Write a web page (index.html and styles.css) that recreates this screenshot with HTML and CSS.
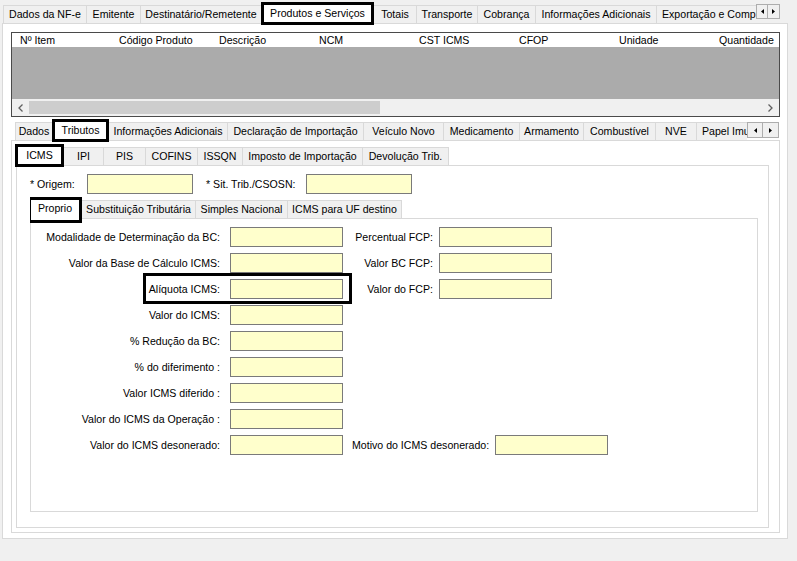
FILE: index.html
```html
<!DOCTYPE html>
<html lang="pt-BR">
<head>
<meta charset="utf-8">
<title>NF-e - Produtos e Serviços</title>
<link rel="stylesheet" href="styles.css">
</head>
<body>
<div class="strip top">
  <div class="tabs">
    <div class="tab">Dados da NF-e</div>
    <div class="tab">Emitente</div>
    <div class="tab">Destinatário/Remetente</div>
    <div class="tab sel hl">Produtos e Serviços</div>
    <div class="tab">Totais</div>
    <div class="tab">Transporte</div>
    <div class="tab">Cobrança</div>
    <div class="tab">Informações Adicionais</div>
    <div class="tab last">Exportação e Compra</div>
  </div>
  <div class="scroller small">
    <span class="sbtn"><svg width="3" height="5" viewBox="0 0 3 5"><polygon points="3,0 3,5 0,2.5" fill="#000"/></svg></span>
    <span class="sbtn"><svg width="3" height="5" viewBox="0 0 3 5"><polygon points="0,0 0,5 3,2.5" fill="#000"/></svg></span>
  </div>
</div>
<div class="panel outer">
  <div class="grid">
    <div class="ghead">
      <div class="gcol first">Nº Item</div>
      <div class="gcol">Código Produto</div>
      <div class="gcol">Descrição</div>
      <div class="gcol">NCM</div>
      <div class="gcol">CST ICMS</div>
      <div class="gcol">CFOP</div>
      <div class="gcol">Unidade</div>
      <div class="gcol">Quantidade</div>
    </div>
    <div class="gbody"></div>
    <div class="hscroll">
      <span class="harrow"><svg width="5" height="8" viewBox="0 0 5 8"><polyline points="4.5,0.5 1,4 4.5,7.5" fill="none" stroke="#606060" stroke-width="1.3"/></svg></span>
      <span class="track"><span class="thumb"></span></span>
      <span class="harrow"><svg width="5" height="8" viewBox="0 0 5 8"><polyline points="0.5,0.5 4,4 0.5,7.5" fill="none" stroke="#606060" stroke-width="1.3"/></svg></span>
    </div>
  </div>

  <div class="strip second">
    <div class="tabs">
      <div class="tab">Dados</div>
      <div class="tab sel hl">Tributos</div>
      <div class="tab">Informações Adicionais</div>
      <div class="tab">Declaração de Importação</div>
      <div class="tab">Veículo Novo</div>
      <div class="tab">Medicamento</div>
      <div class="tab">Armamento</div>
      <div class="tab">Combustível</div>
      <div class="tab">NVE</div>
      <div class="tab last">Papel Imune</div>
    </div>
    <div class="scroller big">
      <span class="sbtn"><svg width="3" height="5" viewBox="0 0 3 5"><polygon points="3,0 3,5 0,2.5" fill="#000"/></svg></span>
      <span class="sbtn"><svg width="3" height="5" viewBox="0 0 3 5"><polygon points="0,0 0,5 3,2.5" fill="#000"/></svg></span>
    </div>
  </div>
  <div class="panel trib">
    <div class="strip third">
      <div class="tabs">
        <div class="tab sel hl">ICMS</div>
        <div class="tab">IPI</div>
        <div class="tab">PIS</div>
        <div class="tab">COFINS</div>
        <div class="tab">ISSQN</div>
        <div class="tab">Imposto de Importação</div>
        <div class="tab">Devolução Trib.</div>
      </div>
    </div>
    <div class="panel icms">
      <div class="origem">
        <span class="olabel">* Origem:</span>
        <span class="inp short"></span>
        <span class="olabel2">* Sit. Trib./CSOSN:</span>
        <span class="inp short"></span>
      </div>
      <div class="strip fourth">
        <div class="tabs">
          <div class="tab sel hl">Proprio</div>
          <div class="tab">Substituição Tributária</div>
          <div class="tab">Simples Nacional</div>
          <div class="tab">ICMS para UF destino</div>
        </div>
      </div>
      <div class="panel proprio">
        <div class="frow">
          <span class="flabel">Modalidade de Determinação da BC:</span><span class="inp"></span>
          <span class="flabel2">Percentual FCP:</span><span class="inp"></span>
        </div>
        <div class="frow">
          <span class="flabel">Valor da Base de Cálculo ICMS:</span><span class="inp"></span>
          <span class="flabel2">Valor BC FCP:</span><span class="inp"></span>
        </div>
        <div class="frow marked">
          <span class="flabel">Alíquota ICMS:</span><span class="inp"></span>
          <span class="flabel2">Valor do FCP:</span><span class="inp"></span>
        </div>
        <div class="frow">
          <span class="flabel">Valor do ICMS:</span><span class="inp"></span>
        </div>
        <div class="frow">
          <span class="flabel">% Redução da BC:</span><span class="inp"></span>
        </div>
        <div class="frow">
          <span class="flabel">% do diferimento :</span><span class="inp"></span>
        </div>
        <div class="frow">
          <span class="flabel">Valor ICMS diferido :</span><span class="inp"></span>
        </div>
        <div class="frow">
          <span class="flabel">Valor do ICMS da Operação :</span><span class="inp"></span>
        </div>
        <div class="frow">
          <span class="flabel">Valor do ICMS desonerado:</span><span class="inp"></span>
          <span class="flabel3">Motivo do ICMS desonerado:</span><span class="inp"></span>
        </div>
      </div>
    </div>
  </div>
</div>
</body>
</html>
```

FILE: styles.css
```css
*, *::before, *::after { box-sizing: border-box; }

body {
  margin: 0;
  width: 797px;
  height: 561px;
  overflow: hidden;
  background: #f0f0f0;
  font-family: "Liberation Sans", Arial, sans-serif;
  font-size: 10.6px;
  color: #000;
}

/* ---------- tab strips ---------- */
.strip {
  display: flex;
  align-items: flex-end;
  height: 23px;
  position: relative;
}
.tabs {
  display: flex;
  align-items: flex-end;
  flex: 1;
  min-width: 0;
  height: 100%;
  overflow-x: clip;
  overflow-y: visible;
}
.tab {
  flex-shrink: 0;
  height: 18px;
  line-height: 17px;
  padding: 0;
  text-align: center;
  background: #f0f0f0;
  border: 1px solid #d9d9d9;
  border-bottom: none;
  margin-right: -1px;
  white-space: nowrap;
  overflow: hidden;
}
.tab.last { text-align: left; padding: 0 5px; overflow: visible; }
.tab.sel {
  position: relative;
  z-index: 2;
  height: 23px;
  line-height: 20px;
  margin-bottom: -2px;
  background: #fff;
}
.hl { outline: 3px solid #000; outline-offset: -3px; }

/* top strip widths */
.top { width: 780px; }
.top .tabs { padding-left: 3px; }
.top .tab:nth-child(1) { width: 84px; }
.top .tab:nth-child(2) { width: 55px; }
.top .tab:nth-child(3) { width: 122px; }
.top .tab:nth-child(4) { width: 113px; }
.top .tab:nth-child(5) { width: 44px; }
.top .tab:nth-child(6) { width: 62px; }
.top .tab:nth-child(7) { width: 59px; }
.top .tab:nth-child(8) { width: 122px; }

.scroller {
  display: flex;
  align-self: flex-start;
  flex-shrink: 0;
}
.sbtn {
  display: flex;
  align-items: center;
  justify-content: center;
  background: #f0f0f0;
  border: 1px solid #adadad;
}
.sbtn + .sbtn { border-left: none; }
.scroller.small { margin-top: 4px; }
.scroller.small .sbtn { width: 12px; height: 15px; }
.scroller.big { margin-top: 5px; }
.scroller.big .sbtn { width: 16px; height: 16px; }

/* ---------- panels ---------- */
.panel {
  background: #fff;
  border: 1px solid #d9d9d9;
}
.outer {
  margin-left: 2px;
  width: 786px;
  height: 516px;
  padding: 8px 0 0 8px;
}

/* ---------- grid ---------- */
.grid {
  width: 769px;
  height: 85px;
  border: 1px solid #4a4a4a;
  display: flex;
  flex-direction: column;
  overflow: hidden;
}
.ghead {
  display: flex;
  height: 14px;
  background: #fff;
  flex-shrink: 0;
}
.gcol {
  flex-shrink: 0;
  width: 100px;
  padding-left: 6px;
  line-height: 14px;
  white-space: nowrap;
  overflow: hidden;
}
.gcol.first { width: 101px; padding-left: 8px; }
.gbody {
  height: 52px;
  background: #ababab;
  flex-shrink: 0;
}
.hscroll {
  display: flex;
  height: 17px;
  background: #f0f0f0;
  flex-shrink: 0;
}
.harrow {
  width: 17px;
  display: flex;
  align-items: center;
  justify-content: center;
}
.track {
  flex: 1;
  padding: 2px 0;
}
.thumb {
  display: block;
  width: 351px;
  height: 13px;
  background: #cdcdcd;
}

/* ---------- Tributos ---------- */
.second { width: 768px; }
.second .tabs { padding-left: 4px; }
.second .tab:nth-child(1) { width: 38px; }
.second .tab:nth-child(2) { width: 57px; }
.second .tab:nth-child(3) { width: 120px; }
.second .tab:nth-child(4) { width: 137px; }
.second .tab:nth-child(5) { width: 81px; }
.second .tab:nth-child(6) { width: 77px; }
.second .tab:nth-child(7) { width: 65px; }
.second .tab:nth-child(8) { width: 73px; }
.second .tab:nth-child(9) { width: 42px; }

.trib {
  width: 769px;
  height: 393px;
  padding: 0 0 0 3px;
}
.third { height: 24px; width: 753px; }
.third .tab:nth-child(1) { width: 49px; }
.third .tab:nth-child(2) { width: 41px; }
.third .tab:nth-child(3) { width: 43px; }
.third .tab:nth-child(4) { width: 53px; }
.third .tab:nth-child(5) { width: 46px; }
.third .tab:nth-child(6) { width: 121px; }
.third .tab:nth-child(7) { width: 87px; }

.icms {
  margin-left: 1px;
  width: 753px;
  height: 363px;
  padding: 8px 0 0 13px;
}
.origem {
  display: flex;
  align-items: center;
  height: 20px;
}
.olabel { width: 57px; flex-shrink: 0; }
.olabel2 { width: 100px; margin-left: 13px; flex-shrink: 0; }
.inp {
  display: inline-block;
  flex-shrink: 0;
  width: 113px;
  height: 20px;
  background: #ffffcc;
  border: 1px solid #7a7a7a;
}
.inp.short { width: 106px; }

.fourth { height: 24px; }
.fourth .tab:nth-child(1) { width: 54px; margin-left: -2px; height: 26px; margin-bottom: -5px; line-height: 20px; }
.fourth .tab:nth-child(2) { width: 115px; }
.fourth .tab:nth-child(3) { width: 93px; }
.fourth .tab:nth-child(4) { width: 115px; }

.proprio {
  width: 728px;
  height: 294px;
  padding-top: 8px;
  display: flex;
  flex-direction: column;
  gap: 6px;
}
.frow {
  display: flex;
  align-items: center;
  height: 20px;
  position: relative;
}
.flabel {
  width: 189px;
  flex-shrink: 0;
  text-align: right;
  margin-right: 10px;
  white-space: nowrap;
}
.flabel2 {
  width: 90px;
  flex-shrink: 0;
  text-align: right;
  margin-right: 6px;
  white-space: nowrap;
}
.flabel3 {
  flex-shrink: 0;
  margin-left: 9px;
  margin-right: 6px;
  white-space: nowrap;
}
.frow.marked::after {
  content: "";
  position: absolute;
  left: 112px;
  top: -6px;
  width: 209px;
  height: 31px;
  border: 3px solid #000;
  pointer-events: none;
}
```
